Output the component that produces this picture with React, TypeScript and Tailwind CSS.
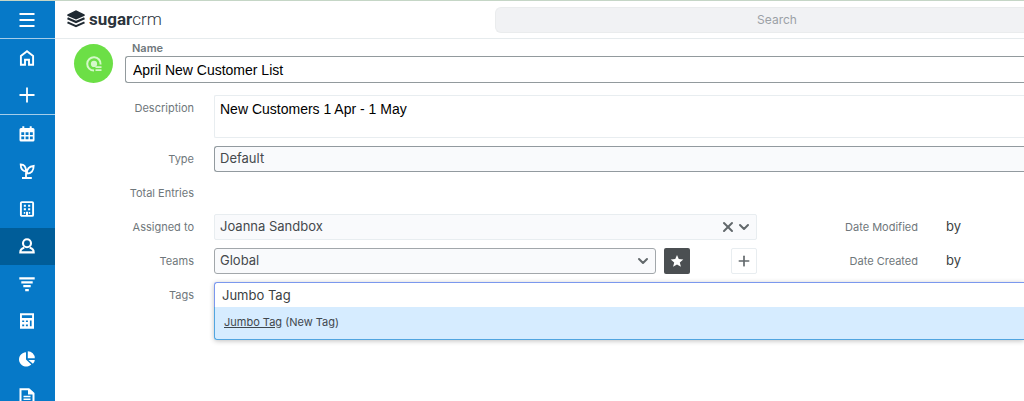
import { ChevronDown, Plus, X } from 'lucide-react'
import type { ReactNode } from 'react'

const primaryLinks = [
  {
    label: 'Home',
    icon: <path d="M1.900 14.800V6L8 1.300 14.100 6v8.800H10V9.700H6v5.100z" fill="none" stroke="currentColor" strokeWidth="1.900" />,
  },
  {
    label: 'Quick create',
    icon: <path d="M8 .5v15M.5 8h15" stroke="currentColor" strokeWidth="1.800" />,
  },
]

const moduleLinks = [
  {
    label: 'Calendar',
    icon: (
      <path
        fillRule="evenodd"
        d="M3.300.3h2V2h5.400V.3h2V2H14a1.500 1.500 0 0 1 1.500 1.500v10.500a1.500 1.500 0 0 1-1.500 1.500H2A1.500 1.500 0 0 1 .5 14V3.500A1.500 1.500 0 0 1 2 2h1.300zM2.300 6.200v2.800h2.900V6.200zm4.300 0v2.800h2.900V6.200zm4.300 0v2.800h2.900V6.200zM2.300 10.500v2.800h2.900v-2.800zm4.300 0v2.800h2.900v-2.800zm4.300 0v2.800h2.900v-2.800z"
      />
    ),
  },
  {
    label: 'Leads',
    icon: (
      <g fill="none" stroke="currentColor" strokeWidth="1.800">
        <path d="M7 15V8.500M7 8.300C3.700 8 1.700 5.500 1.700 1.400 5 1.400 7 3.900 7 8.300zM7.800 10.600c0-4.600 2.400-7.400 6.900-7.800 0 4.900-2.400 7.800-6.900 7.800zM3 15h9.800" />
      </g>
    ),
  },
  {
    label: 'Accounts',
    icon: (
      <>
        <rect x="1.900" y="1.100" width="12.200" height="13.800" rx="1" fill="none" stroke="currentColor" strokeWidth="1.900" />
        <path d="M4.800 3.800h2.100v2H4.800zM9.100 3.800h2.100v2H9.100zM4.800 7.300h2.100v2H4.800zM9.100 7.300h2.100v2H9.100zM4.800 10.900h1.400v1.800H4.800zM9.800 10.900h1.400v1.800H9.800zM7 10.700h2V15H7z" />
      </>
    ),
  },
  {
    label: 'Contacts',
    icon: (
      <g fill="none" stroke="currentColor" strokeWidth="2.100">
        <circle cx="8" cy="5.200" r="4" />
        <path d="M5.300 9.700C2.900 10.200 1.300 11.600 1.300 14.400h13.400c0-2.800-1.600-4.200-4-4.700" />
      </g>
    ),
  },
  {
    label: 'Opportunities',
    icon: <path d="M.3 1.300h15.400v2.200H.3zM2.300 5.200h11.400v2.200H2.300zM4.300 9.100h7.400v2.200H4.300zM6.200 13h3.600v2.200H6.200z" />,
  },
  {
    label: 'Quotes',
    icon: (
      <path
        fillRule="evenodd"
        d="M1 .3h14v15.400H1zM2.900 2.200v2.900h10.200V2.200zM3.200 7.400v1.700h2V7.400zm3.700 0v1.700h2V7.400zM3.200 11.500v1.700h2v-1.700zm3.700 0v1.700h2v-1.700zm4-4.100v5.800h1.700V7.400z"
      />
    ),
  },
  {
    label: 'Reports',
    icon: <path d="M7 1.200v7.300l5.300 5A7.200 7.200 0 1 1 7 1.200zM8.800.2a7 7 0 0 1 7 7h-7zM9.500 8.900h6.300a6 6 0 0 1-1.900 3.900z" />,
  },
  {
    label: 'Documents',
    icon: (
      <>
        <path d="M1.500 1.300h8.300l4.700 4.200v9.200h-13z" fill="none" stroke="currentColor" strokeWidth="2" />
        <path d="M9 1v5.400h5.500V4.800L10.500 1zM4.500 7.700h7v1.500h-7zM4.500 10.600h7v1.500h-7z" />
      </>
    ),
  },
]

function NavLink({ label, icon, active = false }: { label: string; icon: ReactNode; active?: boolean }) {
  return (
    <a
      href="#"
      aria-label={label}
      className={`flex items-center justify-center pr-px text-white ${active ? 'bg-[#005d99]' : ''}`}>
      <svg viewBox="0 0 16 16" className="size-4" fill="currentColor">
        {icon}
      </svg>
    </a>
  )
}

function Sidebar() {
  return (
    <nav className="flex w-[55px] shrink-0 flex-col overflow-hidden bg-[#0679c8]">
      <button
        type="button"
        aria-label="Menu"
        className="flex h-[37px] shrink-0 items-center justify-center pr-px text-white">
        <svg viewBox="0 0 16 16" className="size-4" stroke="currentColor" strokeWidth="2">
          <path d="M.5 2h15M.5 8h15M.5 14h15" />
        </svg>
      </button>
      <div className="grid h-[77px] shrink-0 auto-rows-fr border-y border-[#a5cde9]">
        {primaryLinks.map((link) => (
          <NavLink key={link.label} {...link} />
        ))}
      </div>
      <div className="grid h-[300px] shrink-0 auto-rows-fr">
        {moduleLinks.map((link) => (
          <NavLink key={link.label} {...link} active={link.label === 'Contacts'} />
        ))}
      </div>
    </nav>
  )
}

function Header() {
  return (
    <header className="flex h-[38px] items-center border-b border-[#e6ebed]">
      <a href="#" className="flex w-[440px] shrink-0 items-center gap-1 pb-[2px] pl-3 text-[#1f2932]">
        <svg viewBox="0 0 18 18" className="size-[18px]" fill="currentColor">
          <path d="M9 .3l8.700 4.100v1.300L9 9.500.3 5.700V4.400z" />
          <path
            d="M.5 8.300L9 12l8.500-3.700M.5 12.400L9 16.100l8.500-3.700"
            fill="none"
            stroke="currentColor"
            strokeWidth="2.100"
          />
        </svg>
        <span className="font-[Roboto,sans-serif] text-[17px] leading-5 font-bold text-[#2b343c]">
          sugar<span className="font-light">crm</span>
        </span>
      </a>
      <input
        type="search"
        aria-label="Search"
        placeholder="Search"
        className="h-[26px] min-w-0 flex-1 rounded-l-md border border-r-0 border-[#eaeced] bg-[#f1f2f4] pl-[46px] text-center text-xs placeholder:text-[#9ba1a6]"
      />
    </header>
  )
}

function Row({ label, htmlFor, children }: { label: string; htmlFor?: string; children?: ReactNode }) {
  return (
    <div className="flex min-h-[26px] gap-5">
      <label htmlFor={htmlFor} className="h-[26px] w-[139px] shrink-0 text-right leading-[26px]">
        {label}
      </label>
      <div className="flex min-w-0 flex-1">{children}</div>
    </div>
  )
}

function AuditField({ label }: { label: string }) {
  return (
    <div className="flex w-[267px] shrink-0 items-center">
      <span className="w-[161px] text-right">{label}</span>
      <span className="pl-7 text-[13px] text-[#3b3f42]">by</span>
    </div>
  )
}

function RecordForm() {
  return (
    <form className="font-[Inter,sans-serif] text-[11px] text-[#6f777b]">
      <div className="flex items-end gap-3 pt-[2px] pl-[19px]">
        <div className="flex size-[39px] shrink-0 items-center justify-center rounded-full bg-[#6cdf46]">
          <svg viewBox="0 0 16 16" className="size-4 text-[#d5f8c9]" fill="currentColor">
            <path
              d="M14.600 8.500A6.700 6.700 0 1 0 8 14.600"
              fill="none"
              stroke="currentColor"
              strokeWidth="2"
            />
            <circle cx="8" cy="7.900" r="3.100" />
            <path d="M9.500 10.300h6v1.800h-6zM9.500 13.300h6v1.800h-6z" />
          </svg>
        </div>
        <div className="min-w-0 flex-1">
          <label htmlFor="name" className="block h-[15px] pl-[7px] leading-[15px] font-semibold">
            Name
          </label>
          <input
            id="name"
            defaultValue="April New Customer List"
            className="block h-[27px] w-full rounded-l-[3px] border border-r-0 border-[#929a9d] px-[7px] font-['Liberation_Sans',sans-serif] text-sm text-black"
          />
        </div>
      </div>

      <div className="mt-3 flex flex-col gap-2">
        <Row label="Description" htmlFor="description">
          <textarea
            id="description"
            defaultValue="New Customers 1 Apr - 1 May"
            className="h-[43px] w-full resize-none rounded-l-[2px] border border-r-0 border-[#e8edf0] px-[5px] py-[3px] font-['Liberation_Sans',sans-serif] text-sm text-black"
          />
        </Row>
        <Row label="Type" htmlFor="type">
          <select
            id="type"
            className="h-[26px] w-full appearance-none rounded-l-[3px] border border-r-0 border-[#929a9f] bg-[#f9fafc] px-[5px] text-[13px] text-[#45494d]">
            <option>Default</option>
          </select>
        </Row>
        <Row label="Total Entries" />
        <Row label="Assigned to" htmlFor="assigned">
          <div className="flex h-[26px] min-w-0 flex-1 items-center rounded-[2px] border border-[#e8edf0] bg-[#f9fafc] pr-1 text-[#62686b]">
            <select
              id="assigned"
              className="h-full min-w-0 flex-1 appearance-none px-[5px] text-[13px] text-[#45494d]">
              <option>Joanna Sandbox</option>
            </select>
            <button type="button" aria-label="Clear assigned user">
              <X className="size-4" strokeWidth={3} />
            </button>
            <ChevronDown className="size-4" strokeWidth={3} />
          </div>
          <AuditField label="Date Modified" />
        </Row>
        <Row label="Teams" htmlFor="teams">
          <div className="flex h-[26px] min-w-0 flex-1 items-center rounded-[3px] border border-[#a2a7ab] bg-[#f9fafc] pr-1 text-[#62686b]">
            <select
              id="teams"
              className="h-full min-w-0 flex-1 appearance-none px-[5px] text-[13px] text-[#45494d]">
              <option>Global</option>
            </select>
            <ChevronDown className="size-4" strokeWidth={3} />
          </div>
          <button
            type="button"
            aria-label="Primary team"
            className="ml-2 flex size-[26px] shrink-0 items-center justify-center rounded-[2px] bg-[#4b4f52] text-white">
            <svg viewBox="0 0 16 16" className="size-[14px]" fill="currentColor">
              <path d="M8 1l2 4.800 5.200.4-4 3.400 1.300 5.100L8 12l-4.500 2.700 1.300-5.100-4-3.400 5.200-.4z" />
            </svg>
          </button>
          <button
            type="button"
            aria-label="Add team"
            className="ml-[41px] flex size-[26px] shrink-0 items-center justify-center rounded-[2px] border border-[#e8edf0] text-[#62686b]">
            <Plus className="size-4" strokeWidth={2.500} />
          </button>
          <AuditField label="Date Created" />
        </Row>
        <Row label="Tags" htmlFor="tags">
          <div className="min-w-0 flex-1 rounded-l-[3px] shadow-[0_1px_5px_rgba(0,0,0,0.25)]">
            <input
              id="tags"
              role="combobox"
              aria-expanded="true"
              aria-controls="tag-options"
              defaultValue="Jumbo Tag"
              className="block h-[25px] w-full rounded-tl-[3px] border-t border-l border-[#7b98ee] bg-white px-[7px] text-[13px] text-[#3b3f42]"
            />
            <ul
              id="tag-options"
              role="listbox"
              className="rounded-bl-[3px] border-b border-l border-[#51a5e0] bg-[#d6ecff] text-[#3f474d]">
              <li role="option" aria-selected="true" className="h-8 px-[9px] leading-[31px]">
                <span className="underline">Jumbo Tag</span> (New Tag)
              </li>
            </ul>
          </div>
        </Row>
      </div>
    </form>
  )
}

export default function App() {
  return (
    <div className="flex h-screen overflow-hidden border-t border-[#c5d6c6] bg-white font-[Inter,sans-serif]">
      <Sidebar />
      <main className="min-w-0 flex-1">
        <Header />
        <RecordForm />
      </main>
    </div>
  )
}
